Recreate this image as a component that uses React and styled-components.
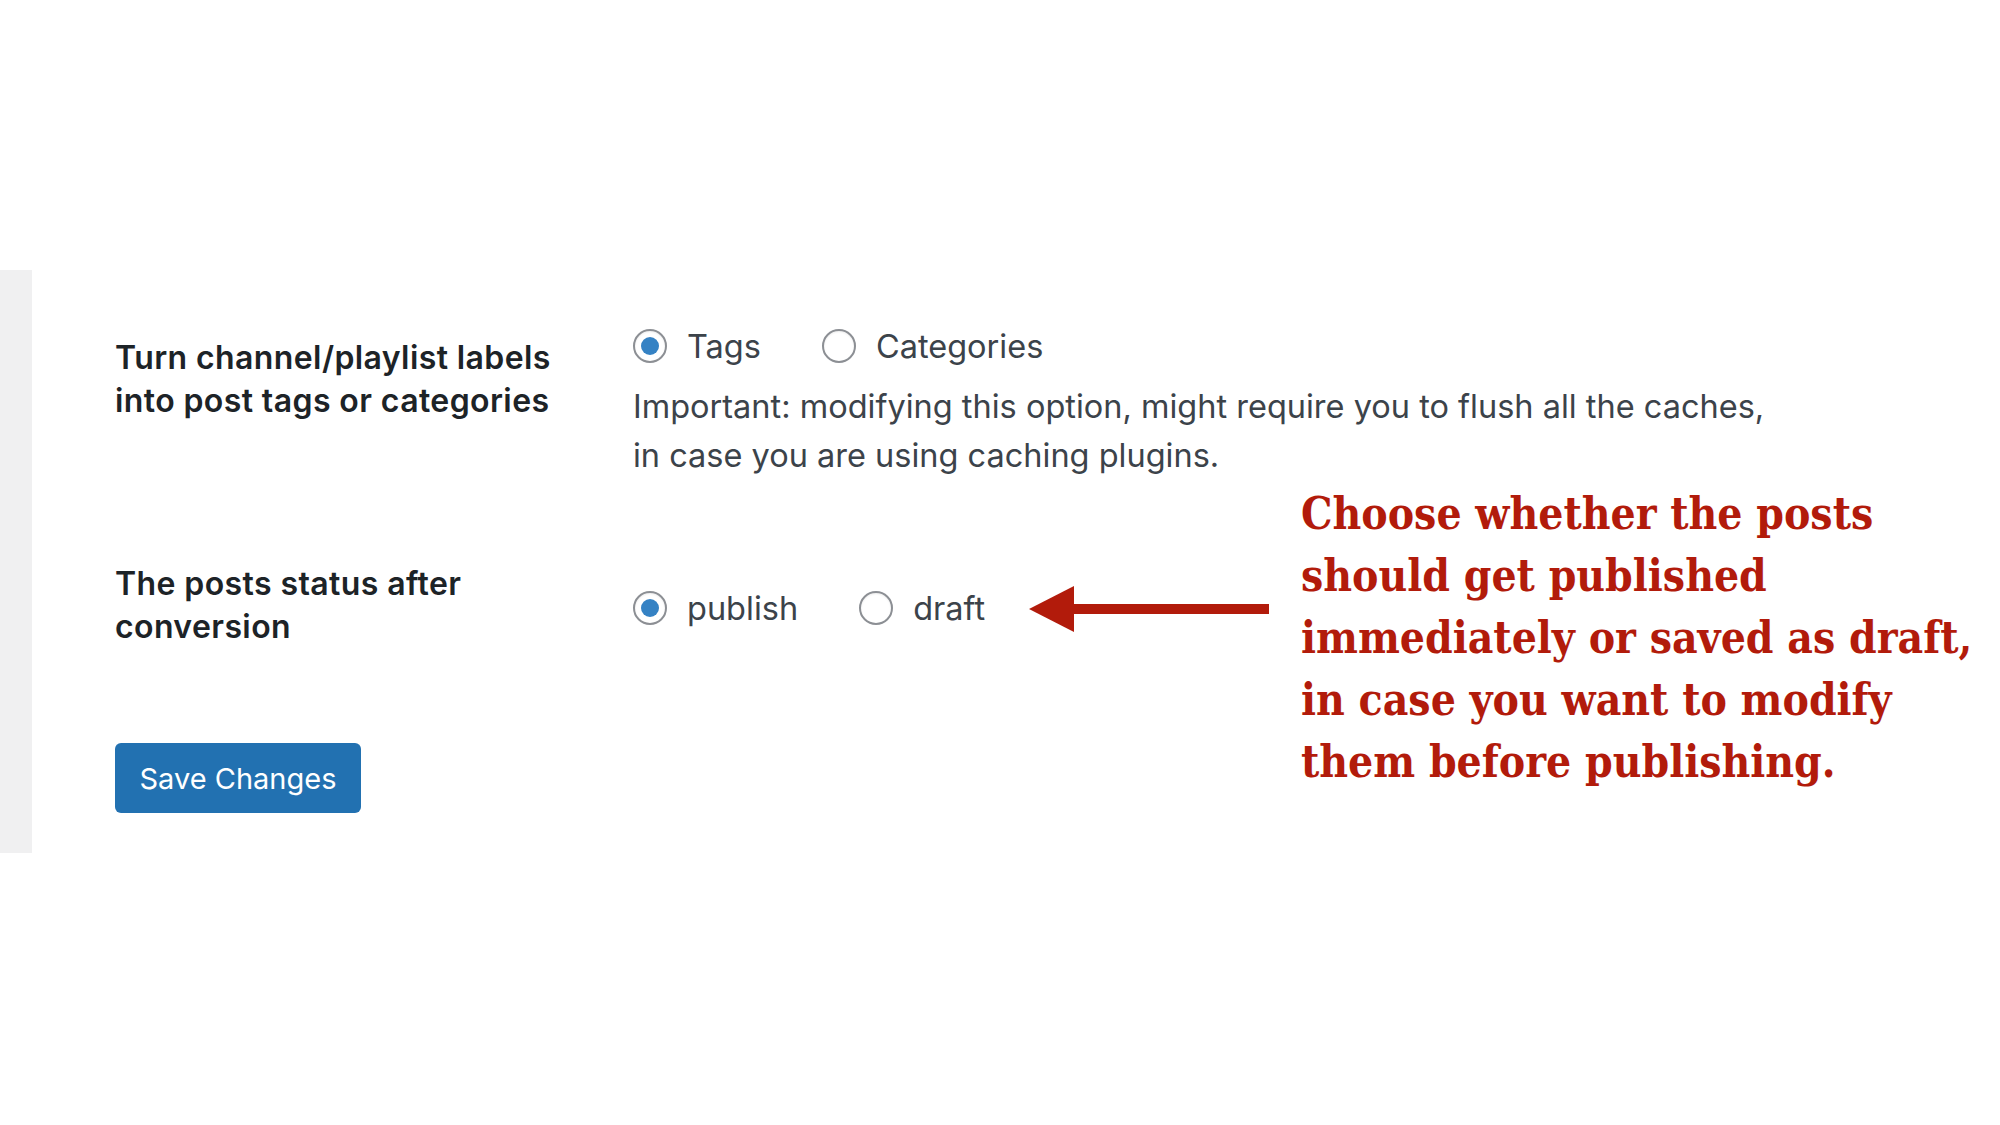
import React from "react";
import styled, { createGlobalStyle } from "styled-components";

const GlobalStyle = createGlobalStyle`
  html, body {
    margin: 0;
    padding: 0;
    background: #ffffff;
  }
  body {
    font-family: Inter, "Liberation Sans", Arial, sans-serif;
  }
`;

const Page = styled.div`
  position: relative;
  width: 2000px;
  height: 1125px;
  padding-top: 270px;
  box-sizing: border-box;
  overflow: hidden;
`;

const Panel = styled.div`
  display: flex;
`;

const Strip = styled.div`
  width: 32px;
  flex: none;
  background: #f0f0f1;
`;

const Content = styled.div`
  padding: 52px 0 40px 83px;
`;

const FormRow = styled.div`
  display: grid;
  grid-template-columns: 518px 1fr;
  margin-bottom: ${(p) => p.$gap || 0}px;
`;

const Label = styled.div`
  margin-top: ${(p) => p.$offset || 0}px;
  font-size: 32px;
  line-height: 43px;
  font-weight: 600;
  letter-spacing: 0.4px;
  color: #1d2327;
`;

const Field = styled.div`
  margin-top: ${(p) => p.$offset || 0}px;
  color: #3c434a;
`;

const Options = styled.div`
  display: flex;
  align-items: center;
  height: 48px;
`;

const Option = styled.label`
  display: flex;
  align-items: center;
  gap: 20px;
  margin-right: 61px;
  font-size: 32.5px;
  color: #3c434a;
`;

const Radio = styled.input.attrs({ type: "radio" })`
  appearance: none;
  margin: 0;
  width: 34px;
  height: 34px;
  border-radius: 50%;
  border: 2px solid #8c8f94;
  background: #fff;
  box-sizing: border-box;
  display: grid;
  place-items: center;
  box-shadow: inset 0 1px 2px rgba(0, 0, 0, 0.08);

  &:checked::before {
    content: "";
    width: 18px;
    height: 18px;
    border-radius: 50%;
    background: #3582c4;
  }
`;

const Description = styled.p`
  margin: 12px 0 0;
  font-size: 32.5px;
  line-height: 49px;
  color: #3c434a;
`;

const Arrow = styled.svg`
  display: block;
  margin-left: -17px;
  margin-top: 2px;
`;

const SaveButton = styled.button`
  margin-top: 95px;
  width: 246px;
  height: 70px;
  border: none;
  border-radius: 6px;
  background: #2271b1;
  color: #ffffff;
  font-family: Inter, "Liberation Sans", Arial, sans-serif;
  font-size: 29px;
  cursor: pointer;
`;

const Note = styled.div`
  position: absolute;
  left: 1301px;
  top: 483px;
  font-family: "DejaVu Serif", "Liberation Serif", serif;
  font-weight: 700;
  font-stretch: condensed;
  font-size: 44px;
  line-height: 62px;
  color: #b21b0b;
  white-space: nowrap;
`;

const noteLines = [
  "Choose whether the posts",
  "should get published",
  "immediately or saved as draft,",
  "in case you want to modify",
  "them before publishing.",
];

export default function App() {
  return (
    <Page>
      <GlobalStyle />
      <Panel>
        <Strip />
        <Content>
          <FormRow $gap={82}>
            <Label $offset={14}>
              Turn channel/playlist labels
              <br />
              into post tags or categories
            </Label>
            <Field>
              <Options>
                <Option>
                  <Radio name="labels" defaultChecked />
                  Tags
                </Option>
                <Option>
                  <Radio name="labels" />
                  Categories
                </Option>
              </Options>
              <Description>
                Important: modifying this option, might require you to flush all the caches,
                <br />
                in case you are using caching plugins.
              </Description>
            </Field>
          </FormRow>
          <FormRow>
            <Label>
              The posts status after
              <br />
              conversion
            </Label>
            <Field $offset={22}>
              <Options>
                <Option>
                  <Radio name="status" defaultChecked />
                  publish
                </Option>
                <Option>
                  <Radio name="status" />
                  draft
                </Option>
                <Arrow width="240" height="48" viewBox="0 0 240 48">
                  <polygon points="0,24 45,1 45,47" fill="#b21b0b" />
                  <rect x="40" y="19" width="200" height="10" fill="#b21b0b" />
                </Arrow>
              </Options>
            </Field>
          </FormRow>
          <SaveButton>Save Changes</SaveButton>
        </Content>
      </Panel>
      <Note>
        {noteLines.map((l) => (
          <div key={l}>{l}</div>
        ))}
      </Note>
    </Page>
  );
}
